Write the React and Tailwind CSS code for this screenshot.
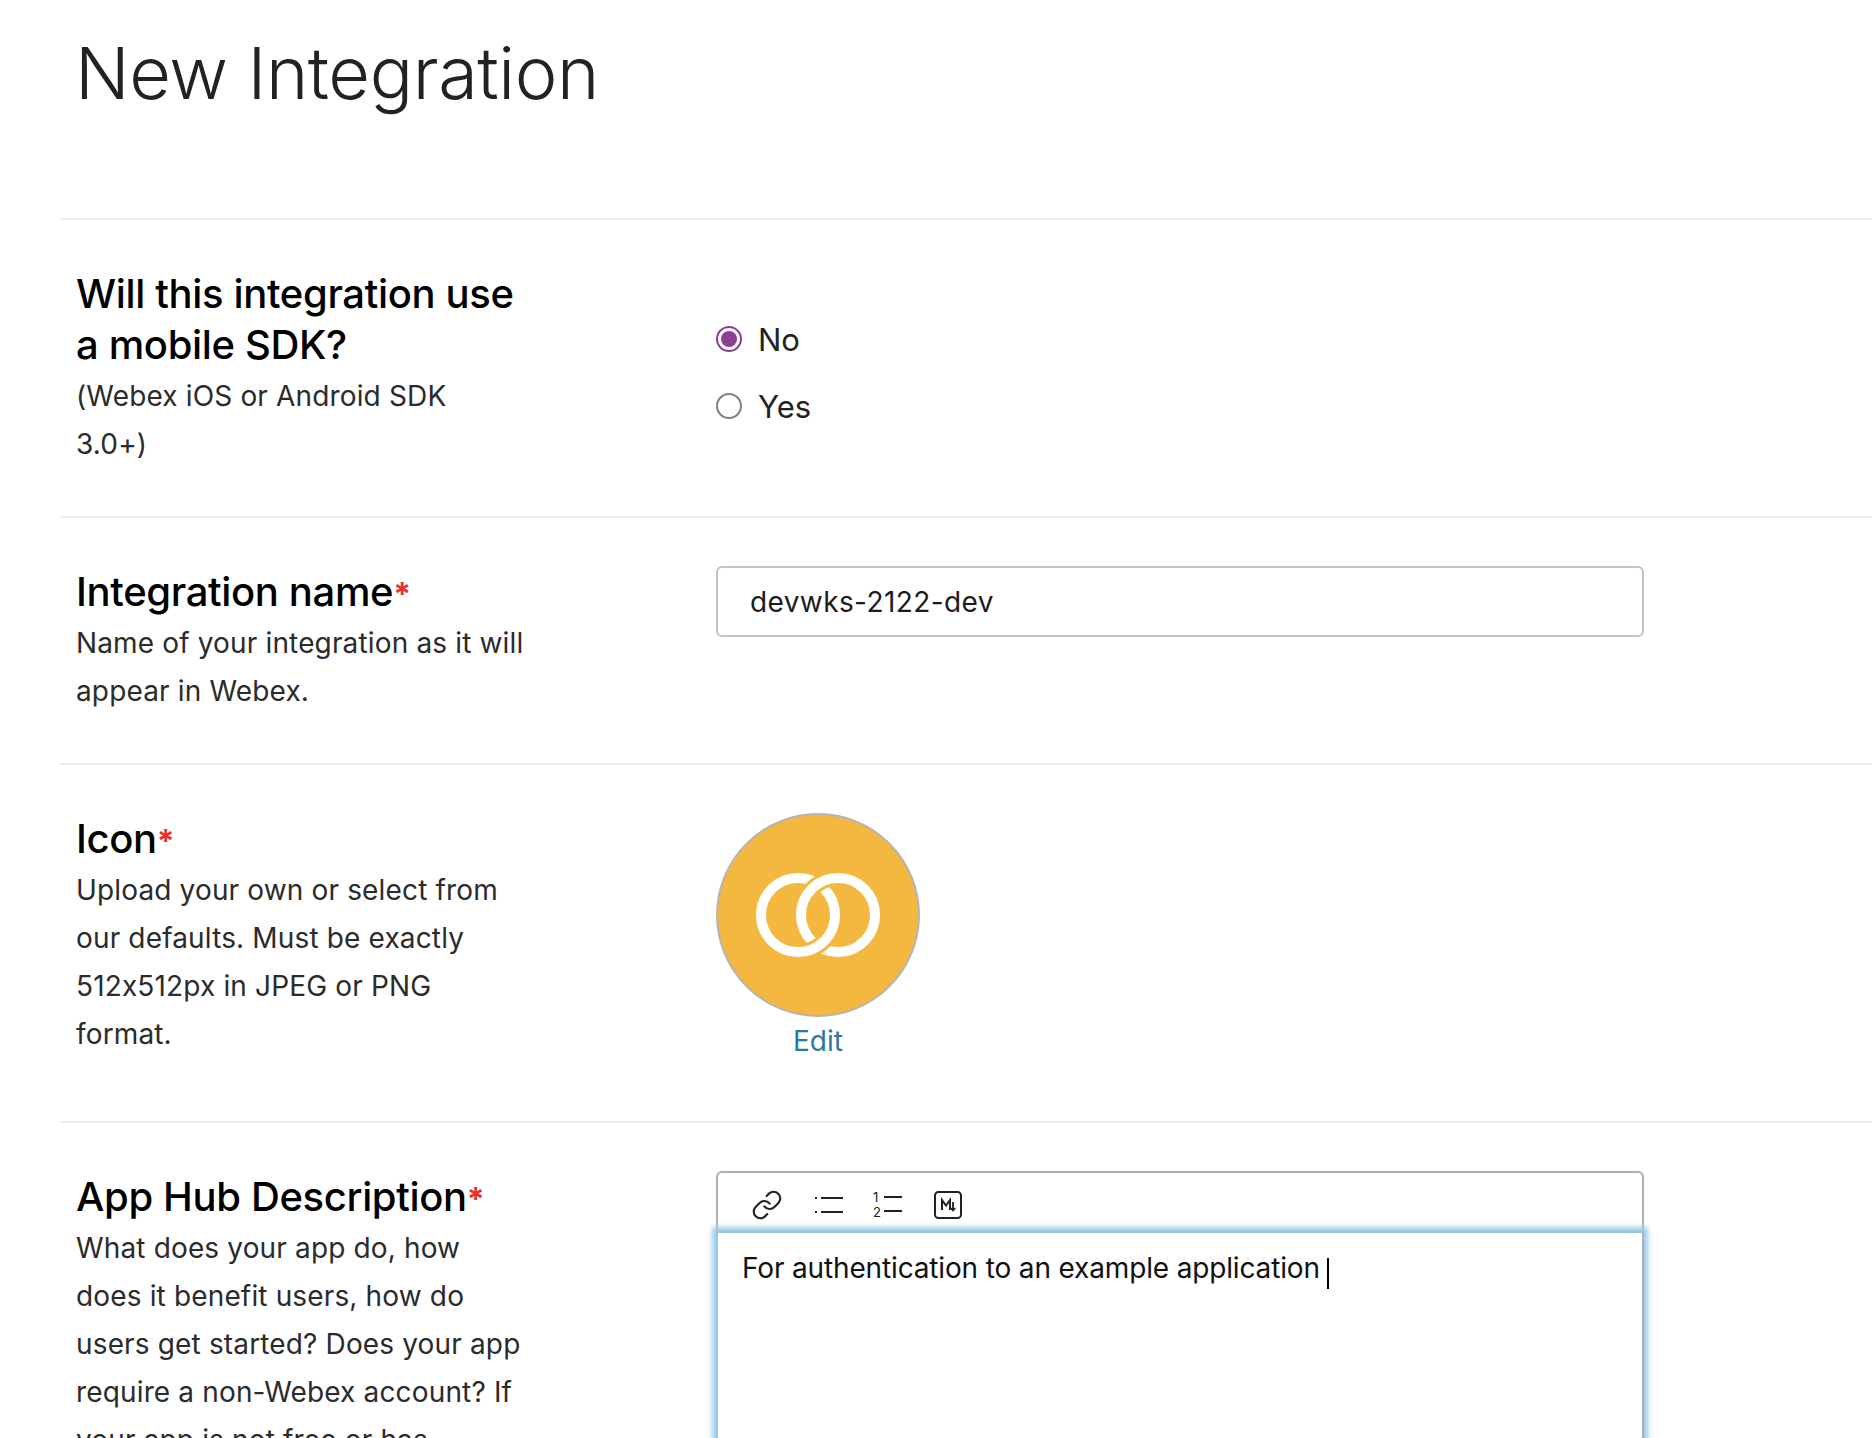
import React from 'react';
import { Link } from 'lucide-react';

const Required = () => <span className="text-[32px] leading-none font-bold text-[#e8312a]">*</span>;

const Heading = ({ children }) => (
    <h2 className="mb-[2px] text-[40px] leading-[51px] font-[550] text-black tracking-[-0.35px]">{children}</h2>
);

const Hint = ({ children }) => (
    <p className="text-[28px] leading-[48px] text-[#2b2b2b] tracking-[0.15px]">{children}</p>
);

const Section = ({ className, left, children }) => (
    <section className={`flex border-t-2 border-[#ececec] ${className}`}>
        <div className="w-[656px] shrink-0 pl-4">
            <div className="w-[452px]">{left}</div>
        </div>
        <div className="w-[928px]">{children}</div>
    </section>
);

const Radio = ({ checked, label }) => (
    <label className="flex items-center gap-[16px] h-[40px]">
        <span className={`mb-[3px] flex items-center justify-center w-[26px] h-[26px] rounded-full border-2 ${checked ? 'border-[#8a3f93]' : 'border-[#808080]'}`}>
            {checked && <span className="w-[16px] h-[16px] rounded-full bg-[#8a3f93]" />}
        </span>
        <span className="text-[31px] text-[#222]">{label}</span>
    </label>
);

const Rings = () => (
    <svg width="128" height="96" viewBox="0 0 128 96" fill="none">
        <circle cx="44" cy="48" r="37" stroke="#fff" strokeWidth="10" />
        <circle cx="84" cy="48" r="37" stroke="#f4b840" strokeWidth="16" />
        <circle cx="84" cy="48" r="37" stroke="#fff" strokeWidth="10" />
        <path d="M81 48 A37 37 0 0 1 44 85" stroke="#f4b840" strokeWidth="16" />
        <path d="M81 48 A37 37 0 0 1 44 85" stroke="#fff" strokeWidth="10" />
    </svg>
);

const BulletIcon = () => (
    <svg width="30" height="24" viewBox="0 0 30 24" fill="none" stroke="#222" strokeWidth="2">
        <path d="M7 5 H29 M7 19 H29" />
        <path d="M1 5 H3 M1 19 H3" />
    </svg>
);

const NumberIcon = () => (
    <svg width="30" height="30" viewBox="0 0 30 30" fill="none">
        <text x="0" y="12" fontSize="13" fontFamily="Inter, sans-serif" fill="#222">1</text>
        <text x="0" y="27" fontSize="13" fontFamily="Inter, sans-serif" fill="#222">2</text>
        <path d="M11 7 H29 M11 21 H29" stroke="#222" strokeWidth="2" />
    </svg>
);

const MarkdownIcon = () => (
    <svg width="28" height="28" viewBox="0 0 28 28" fill="none" stroke="#222">
        <rect x="1" y="1" width="26" height="26" rx="3.5" strokeWidth="2" />
        <path d="M8 19 V9 L12 14.5 L16 9 V19" strokeWidth="2" />
        <path d="M19 11 V19.5 M16.8 17 L19 19.5 L21.2 17" strokeWidth="1.8" />
    </svg>
);

const App = () => {
    return (
        <div className="w-[1872px] h-[1438px] overflow-hidden bg-white font-['Inter',sans-serif]">
            <div className="ml-[60px]">
                <div className="h-[218px] pl-4">
                    <h1 className="-ml-px pt-[27px] text-[72px] leading-[92px] font-light text-[#222] tracking-[-0.4px]">New Integration</h1>
                </div>

                <Section
                    className="h-[298px] pt-[48px]"
                    left={
                        <>
                            <Heading>Will this integration use a mobile SDK?</Heading>
                            <Hint>(Webex iOS or Android SDK<br />3.0+)</Hint>
                        </>
                    }
                >
                    <div className="pt-[52px] flex flex-col gap-[27px]">
                        <Radio checked label="No" />
                        <Radio label="Yes" />
                    </div>
                </Section>

                <Section
                    className="h-[247px] pt-[48px]"
                    left={
                        <>
                            <Heading>Integration name<Required /></Heading>
                            <Hint>Name of your integration as it will appear in Webex.</Hint>
                        </>
                    }
                >
                    <input
                        className="w-full h-[71px] px-[32px] border-2 border-[#c4c4c4] rounded-[6px] text-[28px] text-[#1c1c1c] tracking-[0.4px] outline-none"
                        defaultValue="devwks-2122-dev"
                    />
                </Section>

                <Section
                    className="h-[358px] pt-[48px]"
                    left={
                        <>
                            <Heading>Icon<Required /></Heading>
                            <Hint>Upload your own or select from our defaults. Must be exactly 512x512px in JPEG or PNG format.</Hint>
                        </>
                    }
                >
                    <div className="w-[204px] flex flex-col items-center">
                        <div className="w-[204px] h-[204px] rounded-full bg-[#f4b840] border-2 border-[#b4b4b4] flex items-center justify-center">
                            <Rings />
                        </div>
                        <a className="mt-[3px] text-[28px] leading-[42px] text-[#2d77a0]">Edit</a>
                    </div>
                </Section>

                <Section
                    className="pt-[48px]"
                    left={
                        <>
                            <Heading>App Hub Description<Required /></Heading>
                            <Hint>What does your app do, how does it benefit users, how do users get started? Does your app require a non-Webex account? If your app is not free or has</Hint>
                        </>
                    }
                >
                    <div className="border-2 border-b-0 border-[#b0b0b0] rounded-t-[6px]">
                        <div className="h-[58px] flex items-center pl-[33px] pt-[6px]">
                            <Link size={32} strokeWidth={1.6} color="#222" className="mr-[31px]" />
                            <BulletIcon />
                            <div className="w-[29px]" />
                            <NumberIcon />
                            <div className="w-[31px]" />
                            <MarkdownIcon />
                        </div>
                    </div>
                    <div className="relative h-[300px] bg-white border-l-2 border-t-2 border-r-2 border-l-[#92c7e6] border-t-[#92c7e6] border-r-[#b0b0b0] shadow-[0_0_5px_4px_#9fcde8] px-[24px] pt-[15px]">
                        <span className="text-[28px] leading-[40px] text-[#111] tracking-[-0.15px]">For authentication to an example application</span>
                        <span className="inline-block align-middle ml-[7px] w-[2px] h-[31px] bg-black" />
                    </div>
                </Section>
            </div>
        </div>
    );
};

export default App;
